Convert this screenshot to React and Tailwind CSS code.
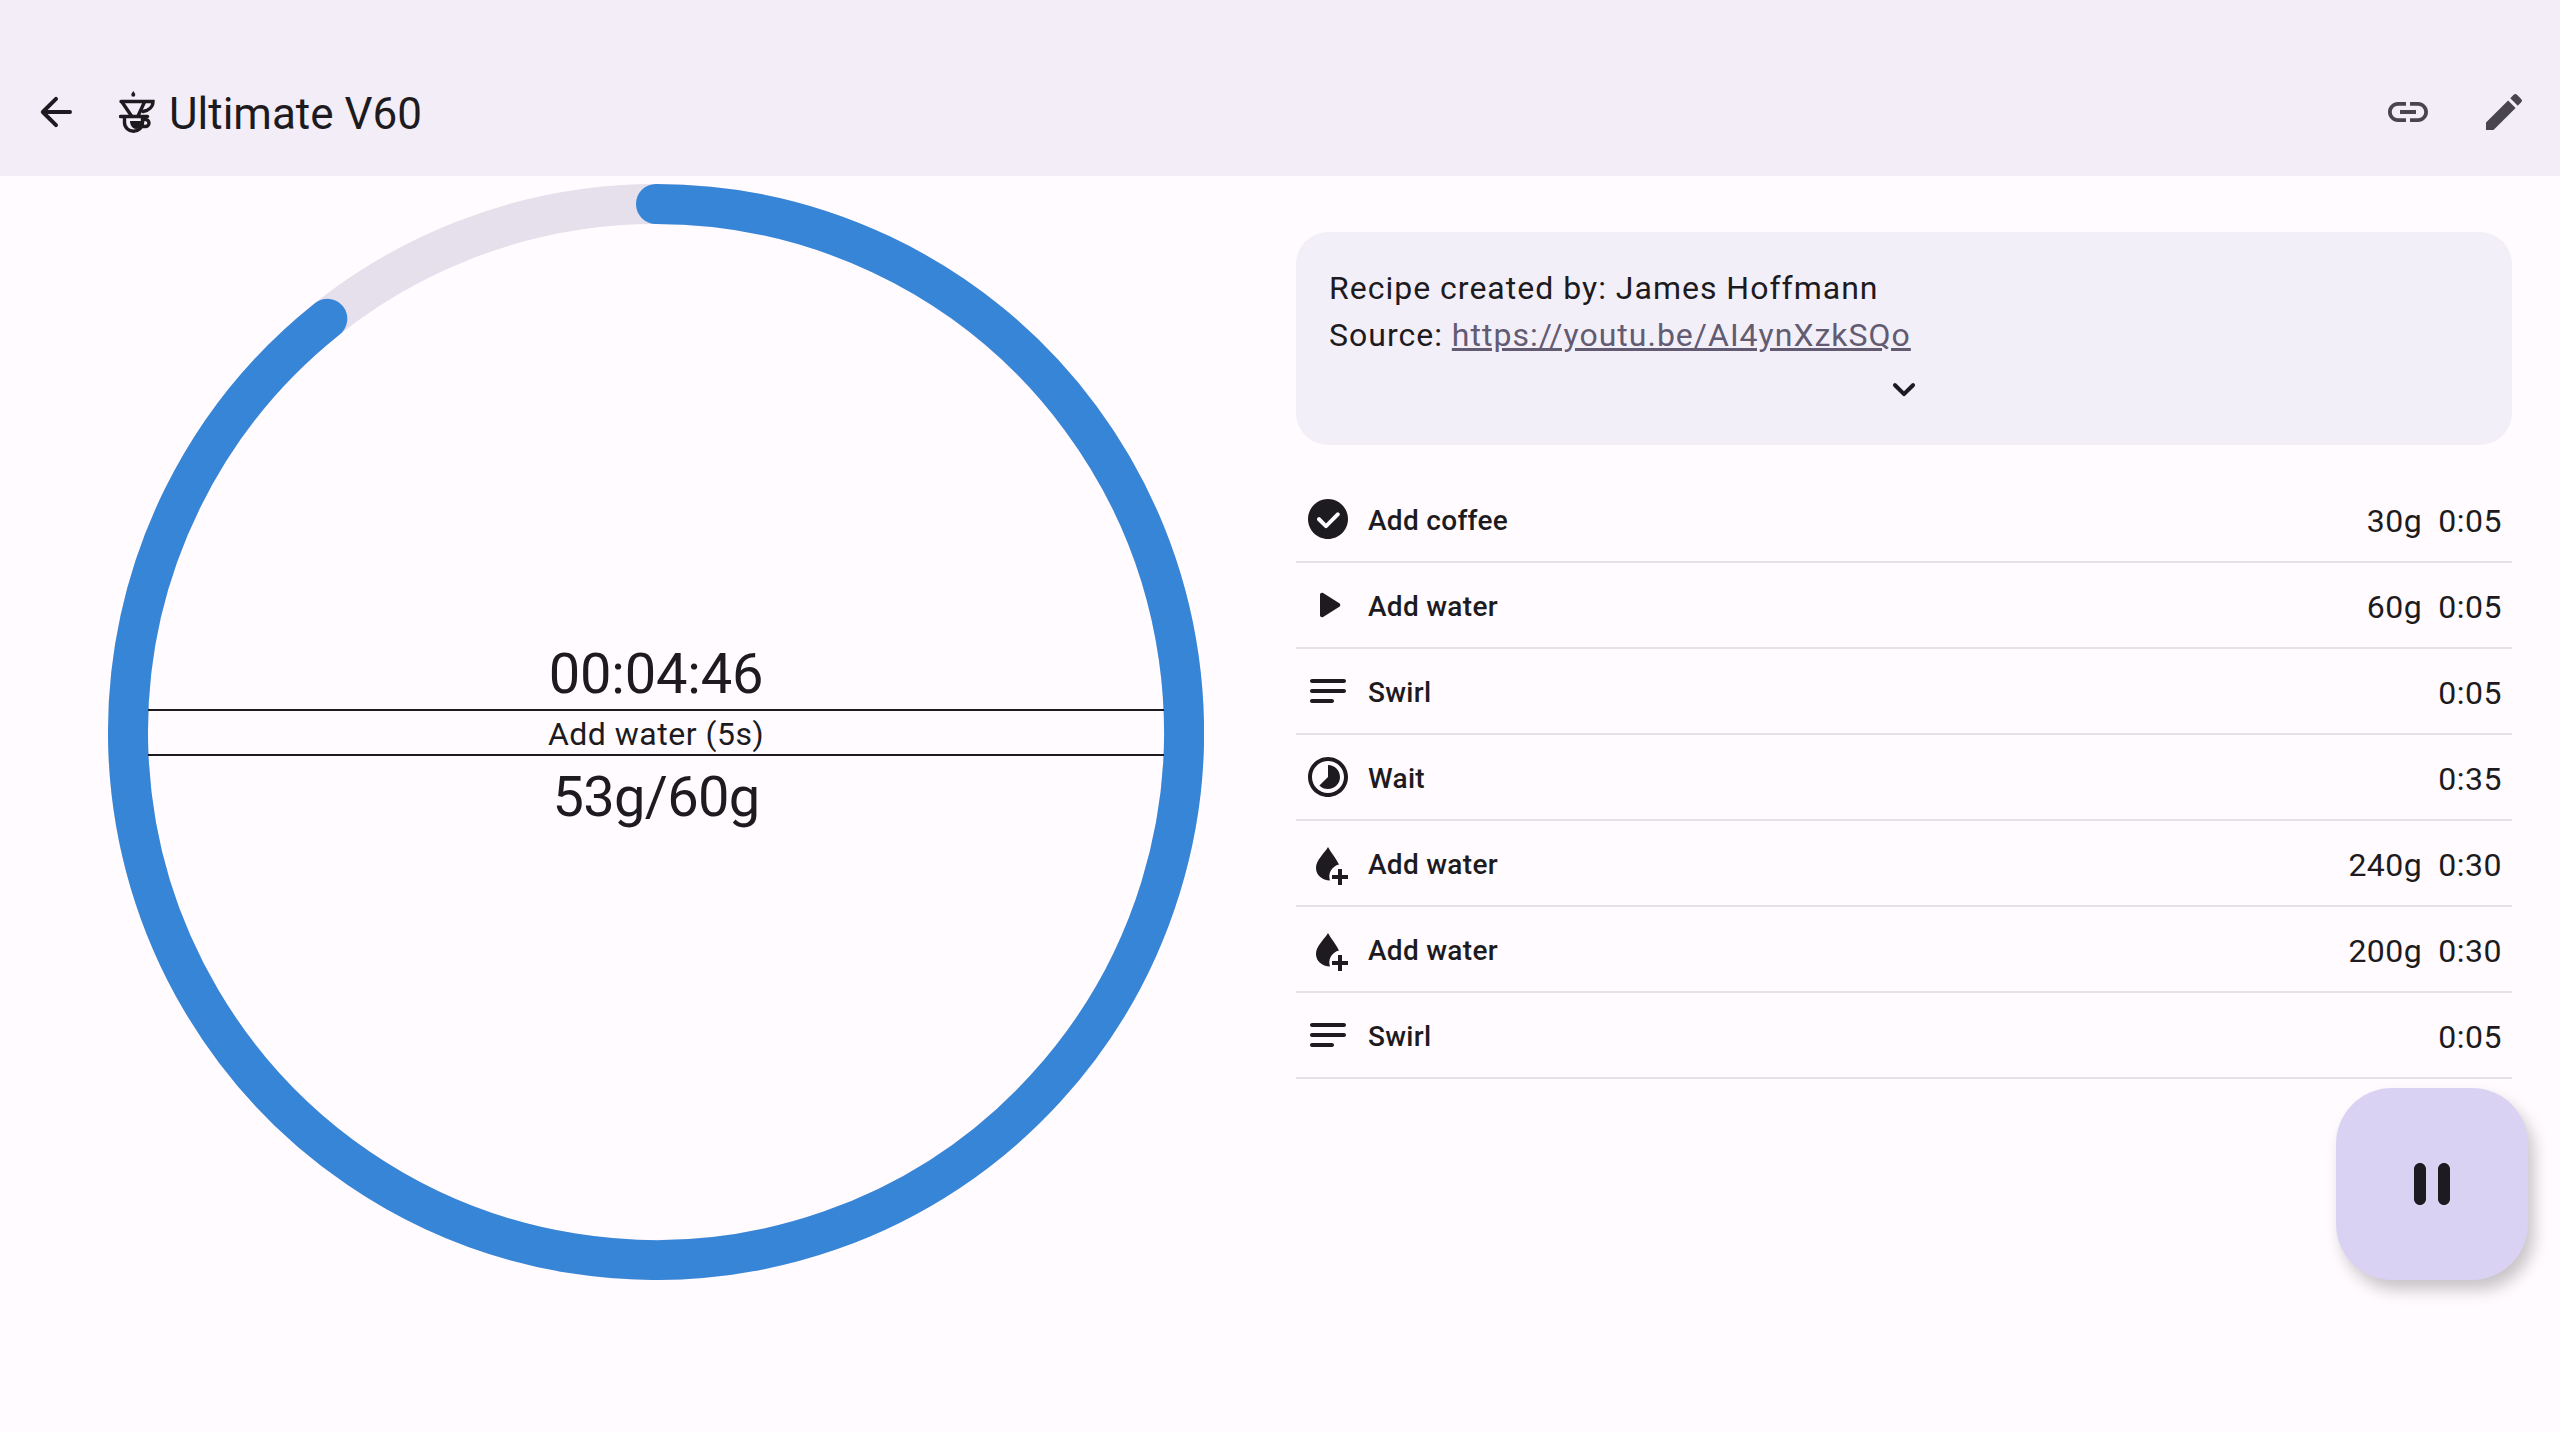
const roboto = "font-['Roboto',sans-serif]";

const steps = [
  { icon: "done", name: "Add coffee", weight: "30g", time: "0:05" },
  { icon: "play", name: "Add water", weight: "60g", time: "0:05" },
  { icon: "swirl", name: "Swirl", time: "0:05" },
  { icon: "wait", name: "Wait", time: "0:35" },
  { icon: "drop", name: "Add water", weight: "240g", time: "0:30" },
  { icon: "drop", name: "Add water", weight: "200g", time: "0:30" },
  { icon: "swirl", name: "Swirl", time: "0:05" },
];

function Icon({ children, className = "", color = "#1d1b20" }) {
  return (
    <svg viewBox="0 0 24 24" fill={color} className={`block w-12 h-12 shrink-0 ${className}`}>
      {children}
    </svg>
  );
}

function StepIcon({ kind }) {
  if (kind === "done") {
    return (
      <Icon>
        <path d="M12 2C6.48 2 2 6.48 2 12s4.48 10 10 10 10-4.48 10-10S17.52 2 12 2zm-1.700 14.300-3.600-3.600a1 1 0 0 1 1.400-1.400l2.900 2.900 5.300-5.300a1 1 0 0 1 1.400 1.400l-6 6a1 1 0 0 1-1.400 0z" />
      </Icon>
    );
  }
  if (kind === "play") {
    return (
      <Icon>
        <path d="M8 6.820v10.360c0 .79.87 1.270 1.540.84l8.140-5.180c.62-.39.62-1.290 0-1.690L9.540 5.980C8.870 5.550 8 6.030 8 6.820z" />
      </Icon>
    );
  }
  if (kind === "swirl") {
    return (
      <Icon>
        <path d="M3 7c0-.55.45-1 1-1h16c.55 0 1 .45 1 1s-.45 1-1 1H4c-.55 0-1-.45-1-1zM3 12c0-.55.45-1 1-1h16c.55 0 1 .45 1 1s-.45 1-1 1H4c-.55 0-1-.45-1-1zM3 17c0-.55.45-1 1-1h10c.55 0 1 .45 1 1s-.45 1-1 1H4c-.55 0-1-.45-1-1z" />
      </Icon>
    );
  }
  if (kind === "wait") {
    return (
      <Icon>
        <path d="M12 2C6.48 2 2 6.48 2 12s4.48 10 10 10 10-4.48 10-10S17.52 2 12 2zm0 18c-4.420 0-8-3.580-8-8s3.580-8 8-8 8 3.580 8 8-3.580 8-8 8z" />
        <path d="M12 6c3.300 0 6 2.700 6 6s-2.700 6-6 6c-1.700 0-3.200-.7-4.300-1.800L12 12V6z" />
      </Icon>
    );
  }
  return (
    <Icon>
      <path d="M12 4C10.200 7.200 6 10.500 6 14.500c0 3.500 3 6.200 7 6.200A6 6 0 0 1 17.500 12.800C16.200 9.800 13.600 7 12 4z" />
      <path d="M17 15h2v3h3v2h-3v3h-2v-3h-3v-2h3v-3z" />
    </Icon>
  );
}

// drip cone above a small cup
function DripperIcon() {
  return (
    <svg viewBox="0 0 36 42" fill="none" className="block w-9 h-[42px] shrink-0" stroke="#1d1b20" strokeWidth="3.4">
      <path d="M14.300 0c.8 1.400 2 2.400 2 3.700a2 2 0 0 1-4 0c0-1.300 1.200-2.300 2-3.700z" fill="#1d1b20" stroke="none" />
      <path d="M2 10.500h32c0 5-4 9-10 10" strokeLinecap="round" />
      <path d="M3 11l9.500 14M25.500 11l-6.500 14" />
      <path d="M1.500 25.500h27" strokeLinecap="round" />
      <path d="M5.500 25.500v6c0 5 4 8.700 9 8.700s9-3.700 9-8.700v-6" />
      <path d="M11 30h12c0 4-2.500 8-6 8s-6-4-6-8z" fill="#1d1b20" stroke="none" />
      <path d="M24 28.500h2.500a3.500 3.500 0 0 1 0 7H23" />
    </svg>
  );
}

function Ring() {
  // end cap sits 38.5deg short of a full turn, going clockwise from the top
  const r = 528;
  const end = (321.5 * Math.PI) / 180;
  const x = 548 + r * Math.sin(end);
  const y = 548 - r * Math.cos(end);
  return (
    <svg viewBox="0 0 1096 1096" className="block w-[1096px] h-[1096px] [grid-area:1/1]" fill="none">
      <circle cx="548" cy="548" r={r} stroke="#e6e0ec" strokeWidth="40" />
      <path
        d={`M548 20A${r} ${r} 0 1 1 ${x} ${y}`}
        stroke="#3685d7"
        strokeWidth="40"
        strokeLinecap="round"
      />
    </svg>
  );
}

export default function App() {
  return (
    <div className={`relative min-h-[1432px] bg-[#fffbfe] text-[#1d1b20] ${roboto}`}>
      {/* HEADER */}
      <header className="h-[176px] pt-12 pl-2 pr-2 bg-[#f3edf7] flex items-center">
        <div className="w-24 h-12 flex items-center justify-center">
          <Icon>
            <path d="M19 11H7.830l4.880-4.880a1 1 0 0 0-1.420-1.420l-6.590 6.590a1 1 0 0 0 0 1.420l6.590 6.590a1 1 0 0 0 1.420-1.410L7.830 13H19a1 1 0 0 0 0-2z" />
          </Icon>
        </div>
        <div className="ml-[15px] flex items-center">
          <DripperIcon />
          <h1 className="ml-[14px] pt-[3px] text-[44px] leading-[56px] font-normal">Ultimate V60</h1>
        </div>
        <div className="ml-auto flex">
          <div className="w-24 h-12 flex items-center justify-center">
            <Icon color="#49454f">
              <path d="M3.900 12c0-1.710 1.390-3.100 3.100-3.100h4V7H7c-2.760 0-5 2.240-5 5s2.240 5 5 5h4v-1.900H7c-1.710 0-3.100-1.390-3.100-3.100zM8 13h8v-2H8v2zm9-6h-4v1.900h4c1.710 0 3.100 1.390 3.100 3.100s-1.390 3.100-3.100 3.100h-4V17h4c2.760 0 5-2.240 5-5s-2.240-5-5-5z" />
            </Icon>
          </div>
          <div className="w-24 h-12 flex items-center justify-center">
            <Icon color="#49454f">
              <path d="M3 17.250V21h3.750L17.810 9.940l-3.750-3.750L3 17.250zM20.710 7.040a1 1 0 0 0 0-1.410l-2.340-2.340a1 1 0 0 0-1.410 0l-1.830 1.830 3.750 3.750 1.830-1.830z" />
            </Icon>
          </div>
        </div>
      </header>

      {/* BODY */}
      <main className="flex pl-[108px] gap-[92px]">
        <div className="mt-2 grid w-[1096px] h-[1096px] shrink-0">
          <Ring />
          <div className="[grid-area:1/1] flex flex-col items-center justify-center text-center">
            <div className="h-[72px] text-[56px] leading-[75px] tracking-[-0.2px]">00:04:46</div>
            <div className="w-[1016px] h-[47px] border-y-2 border-[#1d1b20] text-[32px] leading-[46px] tracking-[0.5px]">
              Add water (5s)
            </div>
            <div className="h-[72px] text-[56px] leading-[82px] tracking-[-0.7px]">53g/60g</div>
          </div>
        </div>

        <div className="mt-14 w-[1216px] shrink-0">
          <section className="h-[213px] rounded-[32px] bg-[#f3eff9] pt-[33px] pl-[33px] pr-8 flex flex-col">
            <p className="text-[32px] leading-[47px] tracking-[1px]">Recipe created by: James Hoffmann</p>
            <p className="text-[32px] leading-[47px] tracking-[1px]">
              Source: <span className="text-[#625b71] underline">https://youtu.be/AI4ynXzkSQo</span>
            </p>
            <div className="mt-[6px] -ml-px flex justify-center">
              <Icon>
                <path d="M15.880 9.290 12 13.170 8.120 9.290a1 1 0 0 0-1.410 1.410l4.590 4.590a1 1 0 0 0 1.410 0l4.590-4.590a1 1 0 0 0-1.410-1.410z" />
              </Icon>
            </div>
          </section>

          <ul className="mt-8">
            {steps.map((step, i) => (
              <li key={i} className="h-[86px] border-b-2 border-[#e6e0e9] pl-2 pr-[10px] flex items-center">
                <StepIcon kind={step.icon} />
                <span className="ml-4 pt-[3px] text-[28px] font-medium tracking-[0.3px]">{step.name}</span>
                <span className="ml-auto pt-1 text-[32px] tracking-[0.5px] flex gap-4">
                  {step.weight && <span>{step.weight}</span>}
                  <span>{step.time}</span>
                </span>
              </li>
            ))}
          </ul>
        </div>
      </main>

      {/* FAB */}
      <button className="absolute right-8 bottom-[152px] w-48 h-48 rounded-[56px] bg-[#dad2f3] shadow-[6px_10px_16px_rgba(0,0,0,0.22)] flex items-center justify-center">
        <svg viewBox="0 0 24 24" fill="#1d1b20" className="block w-[72px] h-[72px]">
          <path d="M8 19c1.100 0 2-.9 2-2V7c0-1.100-.9-2-2-2s-2 .9-2 2v10c0 1.100.9 2 2 2zm6-12v10c0 1.100.9 2 2 2s2-.9 2-2V7c0-1.100-.9-2-2-2s-2 .9-2 2z" />
        </svg>
      </button>
    </div>
  );
}
